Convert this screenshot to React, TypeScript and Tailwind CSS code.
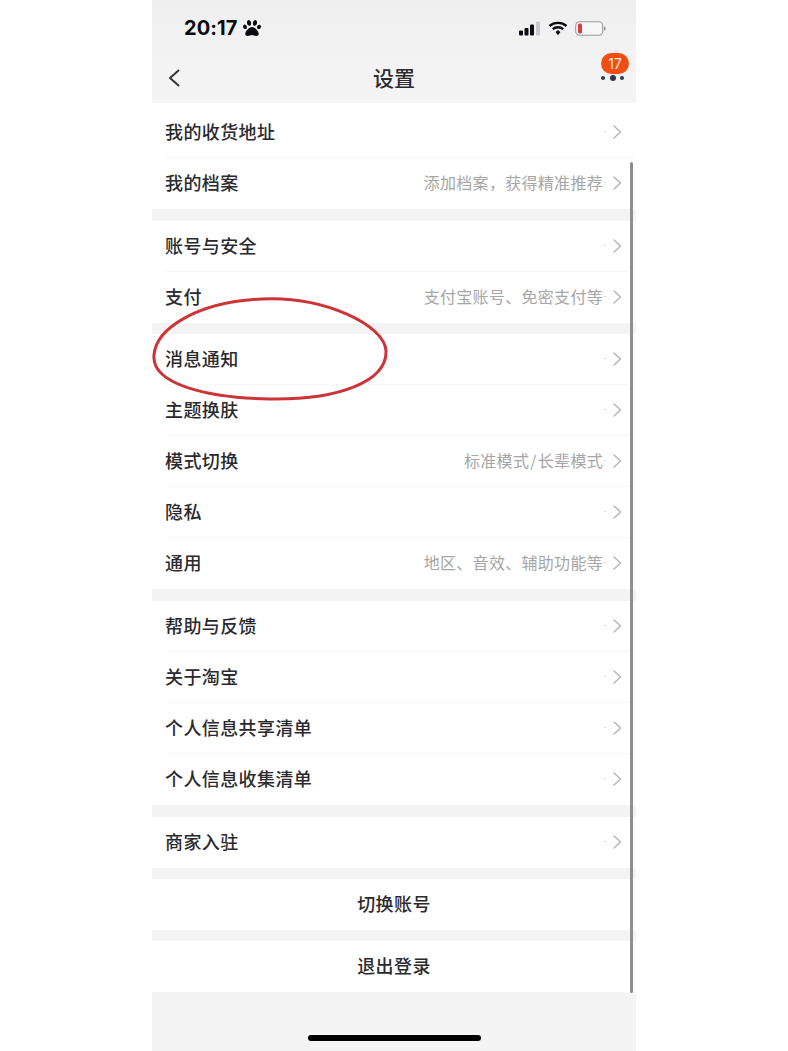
import { FaPaw } from "react-icons/fa";

const cjk = { fontFamily: '"Noto Sans CJK SC", "Noto Sans", sans-serif' };

type RowData = { label: string; hint?: string };

const groups: RowData[][] = [
  [{ label: "我的收货地址" }, { label: "我的档案", hint: "添加档案，获得精准推荐" }],
  [{ label: "账号与安全" }, { label: "支付", hint: "支付宝账号、免密支付等" }],
  [
    { label: "消息通知" },
    { label: "主题换肤" },
    { label: "模式切换", hint: "标准模式/长辈模式" },
    { label: "隐私" },
    { label: "通用", hint: "地区、音效、辅助功能等" },
  ],
  [
    { label: "帮助与反馈" },
    { label: "关于淘宝" },
    { label: "个人信息共享清单" },
    { label: "个人信息收集清单" },
  ],
  [{ label: "商家入驻" }],
];

function Chevron() {
  return (
    <svg width="9" height="14" viewBox="0 0 9 14" fill="none" className="mt-[1px] shrink-0">
      <path d="M1 1 L7.5 7 L1 13" stroke="#b4b4b4" strokeWidth="1.4" strokeLinecap="round" strokeLinejoin="round" />
    </svg>
  );
}

function Hint({ text }: { text?: string }) {
  if (!text) return <span className="ml-auto" />;
  const parts = text.split("/");
  return (
    <span className="ml-auto text-[16px] leading-none tracking-[0.3px] text-[#a6a6a6]">
      {parts.length === 2 ? (
        <>
          {parts[0]}
          <span className="mx-[1px]">/</span>
          {parts[1]}
        </>
      ) : (
        text
      )}
    </span>
  );
}

function Row({ data, last }: { data: RowData; last: boolean }) {
  return (
    <div className="relative flex h-[51px] items-center pb-[3px] pl-[13px] pr-[14px]">
      <span className="text-[18px] font-medium leading-none tracking-[0.4px] text-[#2a2a2e]">{data.label}</span>
      <Hint text={data.hint} />
      <span className="ml-[1px] mr-[7px] h-[1px] w-[2px] bg-[#d4d4d4]" />
      <Chevron />
      {!last && <div className="absolute bottom-0 left-[13px] right-0 h-px bg-[#f8f8f8]" />}
    </div>
  );
}

function Action({ label }: { label: string }) {
  return (
    <div className="flex h-[51px] items-center justify-center bg-white pb-[3px]">
      <span className="text-[18px] font-medium leading-none tracking-[0.4px] text-[#2a2a2e]">{label}</span>
    </div>
  );
}

function StatusIcons() {
  return (
    <div className="flex items-center gap-[7px]">
      <svg width="22" height="15" viewBox="0 0 22 15">
        <rect x="0" y="9.5" width="4" height="5" rx="1" fill="#0b0b12" />
        <rect x="5.5" y="7" width="4" height="7.5" rx="1" fill="#0b0b12" />
        <rect x="11" y="3.5" width="4" height="11" rx="1" fill="#0b0b12" />
        <rect x="17" y="0.5" width="4" height="14" rx="1" fill="#c9c9cc" />
      </svg>
      <svg width="20" height="15" viewBox="0 0 20 15" fill="none">
        <path d="M1.5 5 C6 0.8 14 0.8 18.5 5" stroke="#0b0b12" strokeWidth="2.4" />
        <path d="M4.8 8.2 C7.8 5.6 12.2 5.6 15.2 8.2" stroke="#0b0b12" strokeWidth="2.4" />
        <path d="M7.6 11 L10 9 L12.4 11 L10 14.2 Z" fill="#0b0b12" />
      </svg>
      <svg width="31" height="15" viewBox="0 0 31 15" fill="none">
        <rect x="0.7" y="0.7" width="27" height="13.6" rx="4" stroke="#9b9b9b" strokeWidth="1.1" fill="#f6f6f6" />
        <rect x="3" y="2.6" width="4" height="9.8" rx="1.6" fill="#dc3c44" />
        <rect x="29" y="5.5" width="1.4" height="4" rx="0.7" fill="#8a8a8a" />
      </svg>
    </div>
  );
}

export default function App() {
  return (
    <div className="flex h-[1051px] w-[788px] justify-center overflow-hidden bg-white" style={cjk}>
      <div className="relative flex h-full w-[484px] flex-col bg-[#f4f4f4]">
        <header className="h-[103px] shrink-0 bg-gradient-to-b from-[#efefef] to-[#f5f5f5]">
          <div className="flex h-[55px] items-center justify-between pl-[32px] pr-[30px] pt-[1px]">
            <div className="flex items-center gap-[5px]">
              <span className="text-[20px] font-bold leading-none tracking-[0.1px] text-[#0b0b14]" style={{ fontFamily: '"Inter", sans-serif' }}>
                20:17
              </span>
              <FaPaw className="text-[18px] text-[#0b0b12]" />
            </div>
            <StatusIcons />
          </div>
          <div className="relative flex h-[48px] items-start justify-center pt-[7px]">
            <span className="text-[21px] font-medium leading-[30px] text-[#2b2b30]">设置</span>
            <svg width="12" height="18" viewBox="0 0 12 18" fill="none" className="absolute left-[16px] top-[14px]">
              <path d="M10.5 1.5 L2 9 L10.5 16.5" stroke="#33343a" strokeWidth="2" strokeLinecap="round" strokeLinejoin="round" />
            </svg>
            <div className="absolute left-[449px] top-[-2px] flex h-[21px] w-[28px] items-center justify-center rounded-full bg-[#f04e12] text-[14px] leading-none text-[#fde9dc]" style={{ fontFamily: '"Inter", sans-serif' }}>
              17
            </div>
            <div className="absolute left-[449px] top-[20px] flex w-[23px] items-center justify-between">
              <span className="h-[4px] w-[4px] rounded-full bg-[#33384a]" />
              <span className="h-[6px] w-[6px] rounded-full bg-[#33384a]" />
              <span className="h-[4px] w-[4px] rounded-full bg-[#33384a]" />
            </div>
          </div>
        </header>

        <div className="flex flex-col bg-white pt-[4px]">
          {groups[0].map((r, i) => (
            <Row key={r.label} data={r} last={i === groups[0].length - 1} />
          ))}
        </div>
        <div className="mt-[12px] flex flex-col bg-white">
          {groups[1].map((r, i) => (
            <Row key={r.label} data={r} last={i === groups[1].length - 1} />
          ))}
        </div>
        <div className="mt-[11px] flex flex-col bg-white">
          {groups[2].map((r, i) => (
            <Row key={r.label} data={r} last={i === groups[2].length - 1} />
          ))}
        </div>
        <div className="mt-[12px] flex flex-col bg-white">
          {groups[3].map((r, i) => (
            <Row key={r.label} data={r} last={i === groups[3].length - 1} />
          ))}
        </div>
        <div className="mt-[12px] flex flex-col bg-white">
          {groups[4].map((r, i) => (
            <Row key={r.label} data={r} last={i === groups[4].length - 1} />
          ))}
        </div>
        <div className="mt-[11px]">
          <Action label="切换账号" />
        </div>
        <div className="mt-[11px]">
          <Action label="退出登录" />
        </div>

        <div className="absolute bottom-[10px] left-[156px] h-[6px] w-[173px] rounded-full bg-black" />
        <div className="absolute left-[478px] top-[162px] h-[831px] w-[3px] rounded-full bg-[#8f8f8f]" />
        <svg width="240" height="110" viewBox="0 0 240 110" fill="none" className="absolute left-0 top-[295px]">
          <path
            d="M2 60 C4 34 44 7 110 4 C172 1 233 30 234 56 C235 86 188 105 118 104 C58 103 -1 90 2 60 Z"
            stroke="#cc3538"
            strokeWidth="3"
          />
        </svg>
      </div>
    </div>
  );
}
